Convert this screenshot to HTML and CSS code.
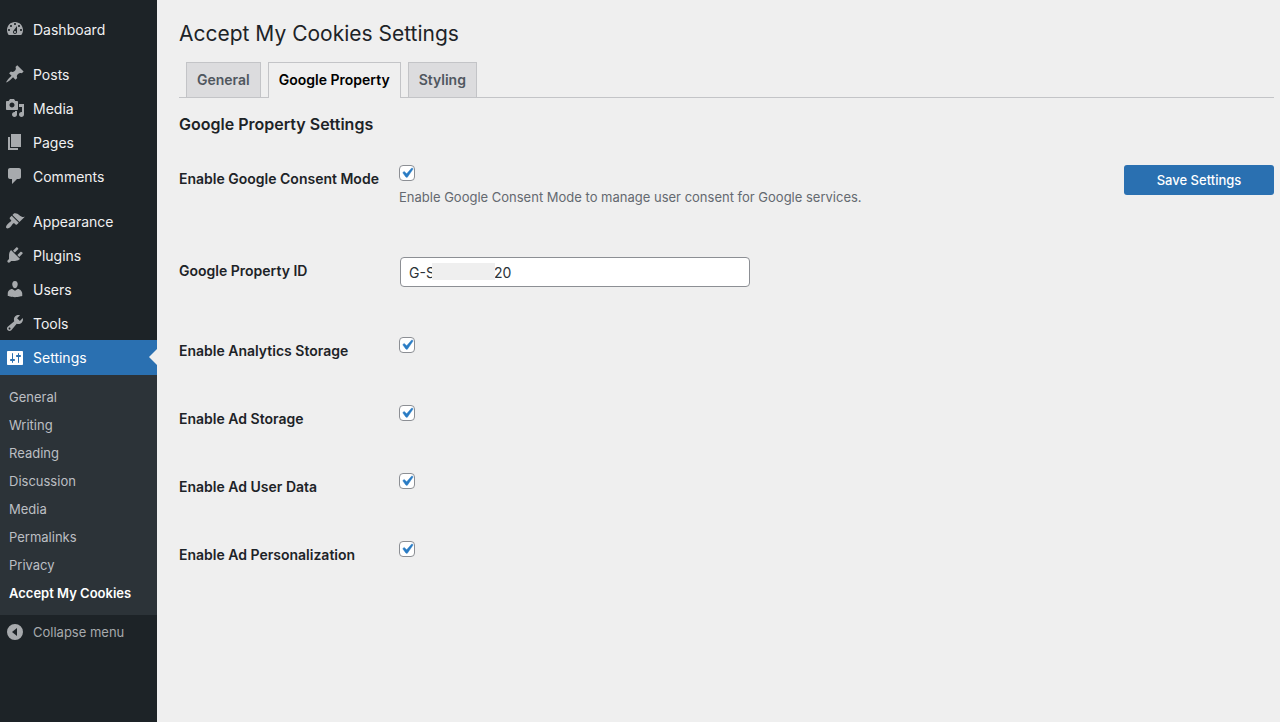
FILE: index.html
```html
<!DOCTYPE html>
<html lang="en">
<head>
  <meta charset="UTF-8">
  <meta name="viewport" content="width=device-width, initial-scale=1">
  <title>Accept My Cookies Settings</title>
  <link rel="stylesheet" href="styles.css">
</head>
<body>

  <div class="layout">
    <nav class="sidebar">
      <ul class="menu">
        <li>
          <a href="#" class="menu-item">
            <svg class="icon" viewBox="0 0 20 20"><path fill-rule="evenodd" d="M3.76 16h12.48c1.1-1.37 1.76-3.11 1.76-5 0-4.42-3.58-8-8-8s-8 3.58-8 8c0 1.89.66 3.63 1.76 5zM10 4c.55 0 1 .45 1 1s-.45 1-1 1-1-.45-1-1 .45-1 1-1zM6 6c.55 0 1 .45 1 1s-.45 1-1 1-1-.45-1-1 .45-1 1-1zM14 6c.55 0 1 .45 1 1s-.45 1-1 1-1-.45-1-1 .45-1 1-1zm-5.37 5.55L12 7v6c0 1.1-.9 2-2 2s-2-.9-2-2c0-.57.24-1.08.63-1.45zM4 10c.55 0 1 .45 1 1s-.45 1-1 1-1-.45-1-1 .45-1 1-1zm12 0c.55 0 1 .45 1 1s-.45 1-1 1-1-.45-1-1 .45-1 1-1zm-5 3c0-.55-.45-1-1-1s-1 .45-1 1 .45 1 1 1 1-.45 1-1z"/></svg>
            Dashboard
          </a>
        </li>
        <li class="group-start">
          <a href="#" class="menu-item">
            <svg class="icon" viewBox="0 0 20 20"><path d="M10.44 3.02l1.82-1.82 6.36 6.35-1.83 1.82c-1.05-.68-2.48-.57-3.41.36l-.75.75c-.92.93-1.04 2.35-.35 3.41l-1.83 1.82-2.41-2.41-2.8 2.79c-.42.42-3.38 2.71-3.8 2.29s1.86-3.39 2.28-3.81l2.79-2.79L4.1 9.36l1.83-1.82c1.05.69 2.48.57 3.4-.36l.75-.75c.93-.92 1.05-2.35.36-3.41z"/></svg>
            Posts
          </a>
        </li>
        <li>
          <a href="#" class="menu-item">
            <svg class="icon" viewBox="0 0 20 20"><path fill-rule="evenodd" d="M13 11V4c0-.55-.45-1-1-1h-1.67L9 1H5L3.67 3H2c-.55 0-1 .45-1 1v7c0 .55.45 1 1 1h10c.55 0 1-.45 1-1zM7 4.5c1.38 0 2.5 1.12 2.5 2.5S8.38 9.5 7 9.5 4.5 8.38 4.5 7 5.62 4.5 7 4.5zM14 6h5v10.5c0 1.38-1.12 2.5-2.5 2.5S14 17.88 14 16.5s1.12-2.5 2.5-2.5c.17 0 .34.02.5.05V9h-3V6zm-4 8.05V13h2v3.5c0 1.38-1.12 2.5-2.5 2.5S7 17.88 7 16.5 8.12 14 9.5 14c.17 0 .34.02.5.05z"/></svg>
            Media
          </a>
        </li>
        <li>
          <a href="#" class="menu-item">
            <svg class="icon" viewBox="0 0 20 20"><path d="M6 15V2h10v13H6zm-1 1h8v2H3V5h2v11z"/></svg>
            Pages
          </a>
        </li>
        <li>
          <a href="#" class="menu-item">
            <svg class="icon" viewBox="0 0 20 20"><path d="M5 2h9c1.1 0 2 .9 2 2v7c0 1.1-.9 2-2 2h-2l-5 5v-5H5c-1.1 0-2-.9-2-2V4c0-1.1.9-2 2-2z"/></svg>
            Comments
          </a>
        </li>
        <li class="group-start">
          <a href="#" class="menu-item">
            <svg class="icon" viewBox="0 0 20 20"><path d="M14.48 11.06L7.41 3.99l1.5-1.5c.5-.56 2.3-.47 3.51.32 1.21.8 1.43 1.28 2.91 2.1 1.18.64 2.45 1.26 4.45.85zm-.71.71L6.7 4.7 4.93 6.47c-.39.39-.39 1.02 0 1.41l1.06 1.06c.39.39.39 1.03 0 1.42-.6.6-1.43 1.11-2.21 1.69-.35.26-.7.53-1.01.84C1.43 14.23.4 16.08 1.4 17.07c.99 1 2.84-.03 4.18-1.36.31-.31.58-.66.85-1.02.57-.78 1.08-1.61 1.69-2.21.39-.39 1.02-.39 1.41 0l1.06 1.06c.39.39 1.02.39 1.41 0z"/></svg>
            Appearance
          </a>
        </li>
        <li>
          <a href="#" class="menu-item">
            <svg class="icon" viewBox="0 0 20 20"><path d="M13.11 4.36L9.87 7.6 8 5.73l3.24-3.24c.35-.34 1.05-.2 1.56.32.52.51.66 1.21.31 1.55zm-8 1.77l.91-1.12 9.01 9.01-1.19.84c-.71.71-2.63 1.16-3.82 1.16H6.14L4.9 17.26c-.59.59-1.54.59-2.12 0-.59-.58-.59-1.53 0-2.12l1.24-1.24v-3.88c0-1.13.4-3.19 1.09-3.89zm7.26 3.97l3.24-3.24c.34-.35 1.04-.21 1.55.31.52.51.66 1.21.31 1.55l-3.24 3.25z"/></svg>
            Plugins
          </a>
        </li>
        <li>
          <a href="#" class="menu-item">
            <svg class="icon" viewBox="0 0 20 20"><path d="M10 9.25c-2.27 0-2.73-3.44-2.73-3.44C7 4.02 7.82 2 9.97 2c2.16 0 2.98 2.02 2.71 3.81 0 0-.41 3.44-2.68 3.44zm0 2.57L12.72 10c2.39 0 4.52 2.33 4.52 4.53v2.49s-3.65 1.13-7.24 1.13c-3.65 0-7.24-1.13-7.24-1.13v-2.49c0-2.25 1.94-4.48 4.47-4.48z"/></svg>
            Users
          </a>
        </li>
        <li>
          <a href="#" class="menu-item">
            <svg class="icon" viewBox="0 0 20 20"><path fill-rule="evenodd" d="M16.68 9.77c-1.34 1.34-3.3 1.67-4.95.99l-5.41 6.52c-.99.99-2.59.99-3.58 0s-.99-2.59 0-3.57l6.52-5.42c-.68-1.65-.35-3.61.99-4.95 1.28-1.28 3.12-1.62 4.72-1.06l-2.89 2.89 2.82 2.82 2.86-2.87c.53 1.58.18 3.39-1.08 4.65zM3.81 16.21c.4.39 1.04.39 1.43 0 .4-.4.4-1.04 0-1.43-.39-.4-1.03-.4-1.43 0-.39.39-.39 1.03 0 1.43z"/></svg>
            Tools
          </a>
        </li>
        <li>
          <a href="#" class="menu-item current">
            <svg class="icon" viewBox="0 0 20 20"><path fill-rule="evenodd" d="M18 16V4c0-.55-.45-1-1-1H3c-.55 0-1 .45-1 1v12c0 .55.45 1 1 1h14c.55 0 1-.45 1-1zM8 11h1c.55 0 1 .45 1 1s-.45 1-1 1H8v1.5c0 .28-.22.5-.5.5s-.5-.22-.5-.5V13H6c-.55 0-1-.45-1-1s.45-1 1-1h1V5.5c0-.28.22-.5.5-.5s.5.22.5.5V11zm5-2h-1c-.55 0-1-.45-1-1s.45-1 1-1h1V5.5c0-.28.22-.5.5-.5s.5.22.5.5V7h1c.55 0 1 .45 1 1s-.45 1-1 1h-1v5.5c0 .28-.22.5-.5.5s-.5-.22-.5-.5V9z"/></svg>
            Settings
          </a>
          <ul class="submenu">
            <li><a href="#">General</a></li>
            <li><a href="#">Writing</a></li>
            <li><a href="#">Reading</a></li>
            <li><a href="#">Discussion</a></li>
            <li><a href="#">Media</a></li>
            <li><a href="#">Permalinks</a></li>
            <li><a href="#">Privacy</a></li>
            <li><a href="#" class="active">Accept My Cookies</a></li>
          </ul>
        </li>
      </ul>
      <button type="button" class="menu-item collapse">
        <svg class="icon" viewBox="0 0 20 20"><path fill-rule="evenodd" d="M10 2a8 8 0 1 1 0 16 8 8 0 0 1 0-16zM12 6L7 10l5 4z"/></svg>
        Collapse menu
      </button>
    </nav>

    <main class="content">
      <h1>Accept My Cookies Settings</h1>

      <nav class="tabs">
        <a href="#" class="tab">General</a>
        <a href="#" class="tab tab-active">Google Property</a>
        <a href="#" class="tab">Styling</a>
      </nav>

      <h2>Google Property Settings</h2>

      <form class="settings-form">
        <div class="fields">
          <div class="row">
            <label for="consent-mode">Enable Google Consent Mode</label>
            <div class="field">
              <input type="checkbox" id="consent-mode" class="checkbox" checked>
              <p class="description">Enable Google Consent Mode to manage user consent for Google services.</p>
            </div>
          </div>
          <div class="row">
            <label for="property-id">Google Property ID</label>
            <div class="field">
              <div class="text-wrap">
                <input type="text" id="property-id" class="text-input" value="G-S               20">
                <span class="mask"></span>
              </div>
            </div>
          </div>
          <div class="row">
            <label for="analytics-storage">Enable Analytics Storage</label>
            <div class="field"><input type="checkbox" id="analytics-storage" class="checkbox" checked></div>
          </div>
          <div class="row">
            <label for="ad-storage">Enable Ad Storage</label>
            <div class="field"><input type="checkbox" id="ad-storage" class="checkbox" checked></div>
          </div>
          <div class="row">
            <label for="ad-user-data">Enable Ad User Data</label>
            <div class="field"><input type="checkbox" id="ad-user-data" class="checkbox" checked></div>
          </div>
          <div class="row">
            <label for="ad-personalization">Enable Ad Personalization</label>
            <div class="field"><input type="checkbox" id="ad-personalization" class="checkbox" checked></div>
          </div>
        </div>
        <button type="submit" class="save">Save Settings</button>
      </form>
    </main>
  </div>

</body>
</html>
```
FILE: styles.css
```css
* {
  box-sizing: border-box;
}

body {
  margin: 0;
  background: #efefef;
  color: #1d2327;
  font-family: Inter, "Liberation Sans", sans-serif;
  font-size: 13px;
}

ul {
  list-style: none;
  margin: 0;
  padding: 0;
}

a {
  text-decoration: none;
}

.layout {
  display: flex;
  min-height: 100vh;
}

/* sidebar */

.sidebar {
  flex: 0 0 157px;
  padding-top: 12px;
  background: #1d2327;
}

.menu-item {
  position: relative;
  display: flex;
  align-items: center;
  gap: 8px;
  height: 34px;
  padding: 0 5px;
  color: #f0f0f1;
  font-size: 14px;
}

.icon {
  width: 20px;
  height: 20px;
  fill: #a7aaad;
}

.group-start {
  margin-top: 11px;
}

.current {
  height: 35px;
  background: #2a70b1;
  color: #fff;
}

.current .icon {
  fill: #fff;
}

.current::after {
  content: "";
  position: absolute;
  right: 0;
  top: 9px;
  border: 8px solid transparent;
  border-right-color: #efefef;
}

.submenu {
  padding: 8px 0;
  background: #2c3338;
}

.submenu a {
  display: block;
  padding: 0 9px;
  color: #bcbfc3;
  line-height: 28px;
}

.submenu .active {
  color: #fff;
  font-weight: 600;
}

.collapse {
  width: 100%;
  border: 0;
  background: none;
  color: #a7aaad;
  font-family: inherit;
  font-size: 13px;
}

/* main area */

.content {
  flex: 1;
  padding: 18px 6px 0 22px;
}

h1 {
  margin: 0 0 12px;
  font-size: 21px;
  font-weight: 400;
  line-height: 32px;
}

.tabs {
  display: flex;
  gap: 7px;
  padding-left: 7px;
  border-bottom: 1px solid #c3c4c7;
}

.tab {
  padding: 5px 10px;
  border: 1px solid #c3c4c7;
  border-bottom: 0;
  background: #dcdcde;
  color: #50575e;
  font-size: 14px;
  font-weight: 600;
  line-height: 24px;
}

.tab-active {
  margin-bottom: -1px;
  padding-bottom: 6px;
  background: #efefef;
  color: #000;
}

h2 {
  margin: 14px 0;
  font-size: 16px;
  font-weight: 600;
  line-height: 24px;
}

.settings-form {
  display: flex;
  align-items: flex-start;
  justify-content: space-between;
}

.row {
  display: grid;
  grid-template-columns: 220px auto;
}

.row label {
  padding-top: 20px;
  font-size: 14px;
  font-weight: 600;
  line-height: 18px;
}

.field {
  padding: 15px 0 35px;
}

.checkbox {
  appearance: none;
  display: block;
  width: 16px;
  height: 16px;
  margin: 0 0 2px;
  border: 1px solid #8c8f94;
  border-radius: 4px;
  background: #fff;
}

.checkbox:checked {
  background: #fff url("data:image/svg+xml,%3Csvg xmlns='http://www.w3.org/2000/svg' viewBox='0 0 20 20'%3E%3Cpath fill='%232a7cc4' stroke='%232a7cc4' stroke-width='.5' d='M14.83 4.89l1.34.94-5.81 8.38H9.02L5.78 9.67l1.34-1.25 2.57 2.4z'/%3E%3C/svg%3E") center / 20px no-repeat;
}

.description {
  margin: 6px 0 0;
  color: #646970;
  line-height: 20px;
}

.text-wrap {
  position: relative;
  width: 350px;
  margin: 0 1px;
}

.text-input {
  display: block;
  width: 100%;
  height: 30px;
  padding: 0 8px;
  border: 1px solid #8c8f94;
  border-radius: 4px;
  background: #fff;
  color: #2c3338;
  font-family: inherit;
  font-size: 14px;
}

.mask {
  position: absolute;
  left: 32px;
  top: 6px;
  width: 63px;
  height: 17px;
  background: #efefef;
}

.save {
  width: 150px;
  height: 30px;
  margin-top: 15px;
  border: 0;
  border-radius: 3px;
  background: #2a70b1;
  color: #fff;
  font-family: inherit;
  font-size: 13px;
  font-weight: 500;
}
```
